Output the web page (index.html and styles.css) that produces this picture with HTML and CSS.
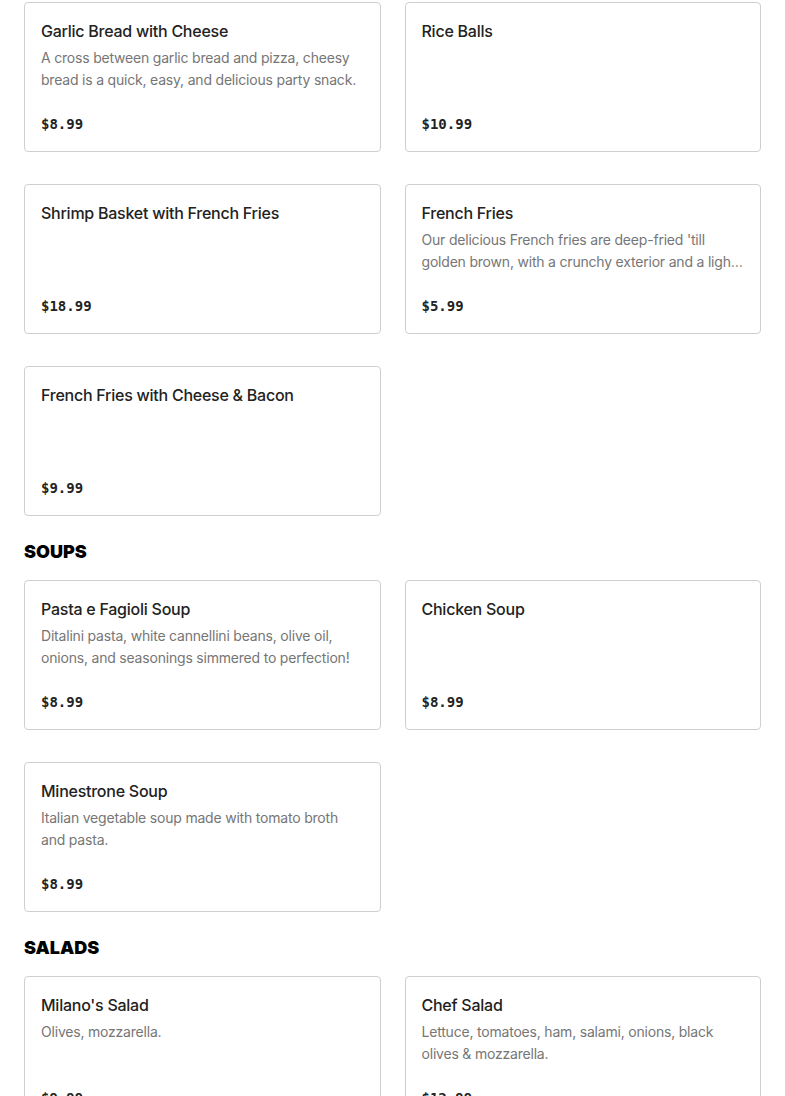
FILE: index.html
```html
<!DOCTYPE html>
<html lang="en">
<head>
<meta charset="utf-8">
<title>Menu</title>
<link rel="stylesheet" href="styles.css">
</head>
<body>
<main class="menu">
  <section class="section">
    <div class="grid">
      <article class="card">
        <h3 class="card-title">Garlic Bread with Cheese</h3>
        <p class="card-desc">A cross between garlic bread and pizza, cheesy bread is a quick, easy, and delicious party snack.</p>
        <div class="card-price">$8.99</div>
      </article>
      <article class="card">
        <h3 class="card-title">Rice Balls</h3>
        <p class="card-desc"></p>
        <div class="card-price">$10.99</div>
      </article>
      <article class="card">
        <h3 class="card-title">Shrimp Basket with French Fries</h3>
        <p class="card-desc"></p>
        <div class="card-price">$18.99</div>
      </article>
      <article class="card">
        <h3 class="card-title">French Fries</h3>
        <p class="card-desc">Our delicious French fries are deep-fried 'till golden brown, with a crunchy exterior and a light and fluffy interior that's perfect for dipping.</p>
        <div class="card-price">$5.99</div>
      </article>
      <article class="card">
        <h3 class="card-title">French Fries with Cheese &amp; Bacon</h3>
        <p class="card-desc"></p>
        <div class="card-price">$9.99</div>
      </article>
    </div>
  </section>

  <section class="section">
    <h2 class="section-title">SOUPS</h2>
    <div class="grid">
      <article class="card">
        <h3 class="card-title">Pasta e Fagioli Soup</h3>
        <p class="card-desc">Ditalini pasta, white cannellini beans, olive oil, onions, and seasonings simmered to perfection!</p>
        <div class="card-price">$8.99</div>
      </article>
      <article class="card">
        <h3 class="card-title">Chicken Soup</h3>
        <p class="card-desc"></p>
        <div class="card-price">$8.99</div>
      </article>
      <article class="card">
        <h3 class="card-title">Minestrone Soup</h3>
        <p class="card-desc">Italian vegetable soup made with tomato broth and pasta.</p>
        <div class="card-price">$8.99</div>
      </article>
    </div>
  </section>

  <section class="section">
    <h2 class="section-title">SALADS</h2>
    <div class="grid">
      <article class="card">
        <h3 class="card-title">Milano's Salad</h3>
        <p class="card-desc">Olives, mozzarella.</p>
        <div class="card-price">$9.99</div>
      </article>
      <article class="card">
        <h3 class="card-title">Chef Salad</h3>
        <p class="card-desc">Lettuce, tomatoes, ham, salami, onions, black olives &amp; mozzarella.</p>
        <div class="card-price">$12.99</div>
      </article>
    </div>
  </section>
</main>
</body>
</html>
```

FILE: styles.css
```css
html, body {
  margin: 0;
  padding: 0;
  background: #ffffff;
}

body {
  font-family: "Inter", "Liberation Sans", sans-serif;
  color: #222222;
}

.menu {
  padding: 2px 24px 24px;
}

.section-title {
  margin: 24px 0 16px;
  font-family: "Inter", "Liberation Sans", sans-serif;
  font-weight: 900;
  font-size: 18px;
  line-height: 24px;
  color: #000000;
}

.grid {
  display: grid;
  grid-template-columns: 1fr 1fr;
  column-gap: 24px;
  row-gap: 32px;
}

.card {
  box-sizing: border-box;
  height: 150px;
  border: 1px solid #cfcfcf;
  border-radius: 4px;
  padding: 16px 16px 17px;
  display: flex;
  flex-direction: column;
}

.card-title {
  margin: 0;
  font-size: 16px;
  font-weight: 500;
  line-height: 24px;
  letter-spacing: -0.25px;
  color: #222222;
}

.card-desc {
  margin: 4px 0 0;
  font-family: "Inter", "Liberation Sans", sans-serif;
  font-size: 14px;
  line-height: 22px;
  letter-spacing: -0.2px;
  color: #767676;
  height: 44px;
  overflow: hidden;
  display: -webkit-box;
  -webkit-line-clamp: 2;
  -webkit-box-orient: vertical;
}

.card-price {
  margin-top: auto;
  font-family: "DejaVu Sans Mono", "Liberation Mono", monospace;
  font-size: 14px;
  font-weight: 700;
  line-height: 20px;
  color: #222222;
}
```
